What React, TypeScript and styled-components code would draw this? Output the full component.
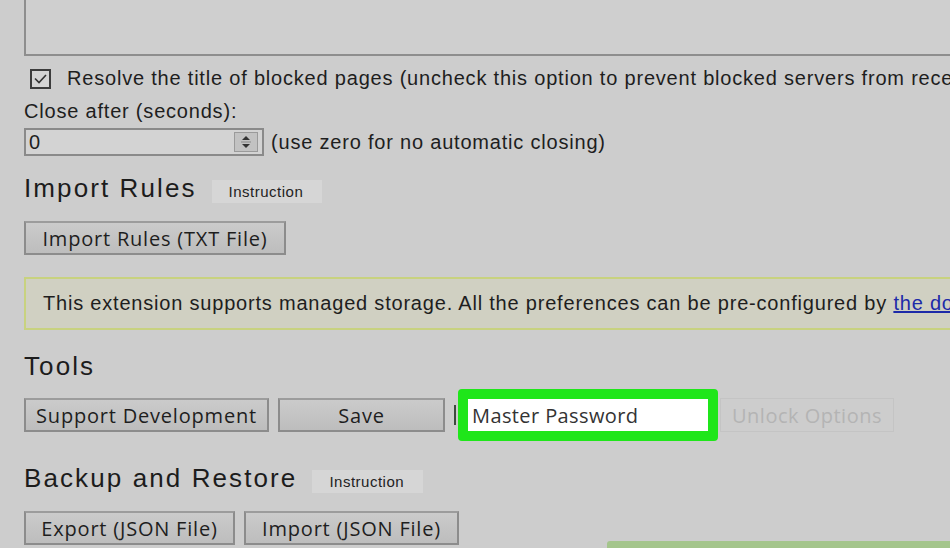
import React from "react";
import styled, { createGlobalStyle } from "styled-components";

const Global = createGlobalStyle`
  html, body { margin: 0; padding: 0; background: #cdcdcd; overflow: hidden; }
  body { font-family: "Liberation Sans", Arial, sans-serif; color: #1e1e1e; }
`;

const Page = styled.div`
  width: 950px;
  height: 548px;
  overflow: hidden;
  padding-left: 24px;
  box-sizing: border-box;
  display: flex;
  flex-direction: column;
  align-items: flex-start;
`;

const TextArea = styled.div`
  width: 1000px;
  height: 56px;
  box-sizing: border-box;
  border-left: 2px solid #8e8e8e;
  border-bottom: 2px solid #8e8e8e;
  background: #cfcfcf;
  flex-shrink: 0;
`;

const CheckRow = styled.label`
  display: flex;
  align-items: center;
  gap: 16px;
  margin-top: 12px;
  padding-left: 6px;
  height: 21px;
  font-size: 20px;
  letter-spacing: 0.8px;
  white-space: nowrap;
  flex-shrink: 0;
`;

const Box = styled.span`
  width: 21px;
  height: 20px;
  box-sizing: border-box;
  border: 2px solid #3c3c3c;
  background: #d4d4d4;
  display: flex;
  align-items: center;
  justify-content: center;
  flex-shrink: 0;
`;

const Label = styled.div`
  font-size: 20px;
  letter-spacing: 0.8px;
  margin-top: 11px;
  height: 22px;
  line-height: 22px;
  flex-shrink: 0;
`;

const InputRow = styled.div`
  display: flex;
  align-items: center;
  gap: 7px;
  margin-top: 6px;
  font-size: 20px;
  letter-spacing: 0.8px;
  white-space: nowrap;
  flex-shrink: 0;
`;

const NumberBox = styled.div`
  width: 240px;
  height: 28px;
  box-sizing: border-box;
  border: 2px solid #8a8a8a;
  background: #d3d3d3;
  display: flex;
  align-items: center;
  justify-content: space-between;
  padding: 0 4px 0 3px;
  font-size: 20px;
`;

const Spinner = styled.div`
  width: 24px;
  height: 20px;
  box-sizing: border-box;
  border: 1px solid #9a9a9a;
  background: #c2c2c2;
  display: flex;
  align-items: center;
  justify-content: center;
`;

const HeadingRow = styled.div<{ $top: number }>`
  display: flex;
  align-items: center;
  gap: 15px;
  margin-top: ${(p) => p.$top}px;
  flex-shrink: 0;
`;

const Heading = styled.h2`
  margin: 0;
  font-weight: normal;
  font-size: 26px;
  letter-spacing: 2.1px;
  line-height: 30px;
  color: #1c1c1c;
  white-space: nowrap;
`;

const Badge = styled.span`
  background: #d6d6d6;
  font-size: 15px;
  letter-spacing: 0.5px;
  height: 23px;
  line-height: 23px;
  padding: 0 19px 0 17px;
  margin-top: 7px;
  color: #222;
`;

const ButtonRow = styled.div<{ $top: number }>`
  display: flex;
  align-items: center;
  gap: 9px;
  margin-top: ${(p) => p.$top}px;
  flex-shrink: 0;
`;

const Button = styled.button<{ $w: number }>`
  width: ${(p) => p.$w}px;
  height: 34px;
  box-sizing: border-box;
  border: 2px solid #8c8c8c;
  border-top-color: #9c9c9c;
  background: linear-gradient(#cbcbcb, #bdbdbd);
  font-family: "Open Sans", "Liberation Sans", sans-serif;
  font-size: 20px;
  letter-spacing: 0.8px;
  color: #1e1e1e;
  padding: 0;
  margin: 0;
  white-space: nowrap;
  flex-shrink: 0;
`;

const Notice = styled.div`
  width: 1000px;
  height: 53px;
  box-sizing: border-box;
  margin-top: 22px;
  border: 2px solid #c8d27f;
  background: #d0d0c2;
  display: flex;
  align-items: center;
  padding-left: 17px;
  font-size: 20px;
  letter-spacing: 0.8px;
  white-space: nowrap;
  flex-shrink: 0;
  a { color: #1d2aa8; text-decoration: underline; }
`;

const PasswordGroup = styled.div`
  display: flex;
  align-items: center;
`;

const Caret = styled.span`
  width: 2px;
  height: 20px;
  background: #3d4a3d;
  margin-right: 2px;
`;

const Highlight = styled.div`
  width: 260px;
  height: 52px;
  box-sizing: border-box;
  border: 10px solid #1fe61a;
  border-radius: 4px;
  background: #ffffff;
  display: flex;
  align-items: center;
  padding-left: 4px;
  font-family: "Open Sans", "Liberation Sans", sans-serif;
  font-size: 20px;
  letter-spacing: 0.4px;
  color: #333;
  white-space: nowrap;
`;

const Disabled = styled.div`
  width: 174px;
  height: 34px;
  box-sizing: border-box;
  border: 1px solid #c4c4c4;
  display: flex;
  align-items: center;
  justify-content: center;
  font-family: "Open Sans", "Liberation Sans", sans-serif;
  font-size: 20px;
  letter-spacing: 0.5px;
  color: #b4b4b4;
  margin-left: -7px;
  white-space: nowrap;
`;

const Toast = styled.div`
  position: absolute;
  left: 607px;
  top: 541px;
  width: 400px;
  height: 20px;
  background: #a4c58c;
  border-radius: 3px 0 0 0;
`;

export default function App() {
  return (
    <>
      <Global />
      <Page>
        <TextArea />
        <CheckRow>
          <Box>
            <svg width="13" height="10" viewBox="0 0 13 10">
              <path d="M1 4.5 L5 8.5 L12 1" fill="none" stroke="#333" strokeWidth="1.6" />
            </svg>
          </Box>
          Resolve the title of blocked pages (uncheck this option to prevent blocked servers from receiving requests)
        </CheckRow>
        <Label>Close after (seconds):</Label>
        <InputRow>
          <NumberBox>
            0
            <Spinner>
              <svg width="12" height="14" viewBox="0 0 12 14">
                <path d="M6 1 L10 5 H2 Z" fill="#333" />
                <path d="M1 7 H11" stroke="#888" strokeWidth="1" />
                <path d="M6 13 L10 9 H2 Z" fill="#333" />
              </svg>
            </Spinner>
          </NumberBox>
          (use zero for no automatic closing)
        </InputRow>
        <HeadingRow $top={17}>
          <Heading>Import Rules</Heading>
          <Badge>Instruction</Badge>
        </HeadingRow>
        <ButtonRow $top={18}>
          <Button $w={262}>Import Rules (TXT File)</Button>
        </ButtonRow>
        <Notice>
          This extension supports managed storage. All the preferences can be pre-configured by&nbsp;
          <a href="#">the domain administrator</a>
        </Notice>
        <HeadingRow $top={21}>
          <Heading>Tools</Heading>
        </HeadingRow>
        <ButtonRow $top={8}>
          <Button $w={245}>Support Development</Button>
          <Button $w={167}>Save</Button>
          <PasswordGroup>
            <Caret />
            <Highlight>Master Password</Highlight>
          </PasswordGroup>
          <Disabled>Unlock Options</Disabled>
        </ButtonRow>
        <HeadingRow $top={22}>
          <Heading>Backup and Restore</Heading>
          <Badge>Instruction</Badge>
        </HeadingRow>
        <ButtonRow $top={18}>
          <Button $w={211}>Export (JSON File)</Button>
          <Button $w={215}>Import (JSON File)</Button>
        </ButtonRow>
      </Page>
      <Toast />
    </>
  );
}
